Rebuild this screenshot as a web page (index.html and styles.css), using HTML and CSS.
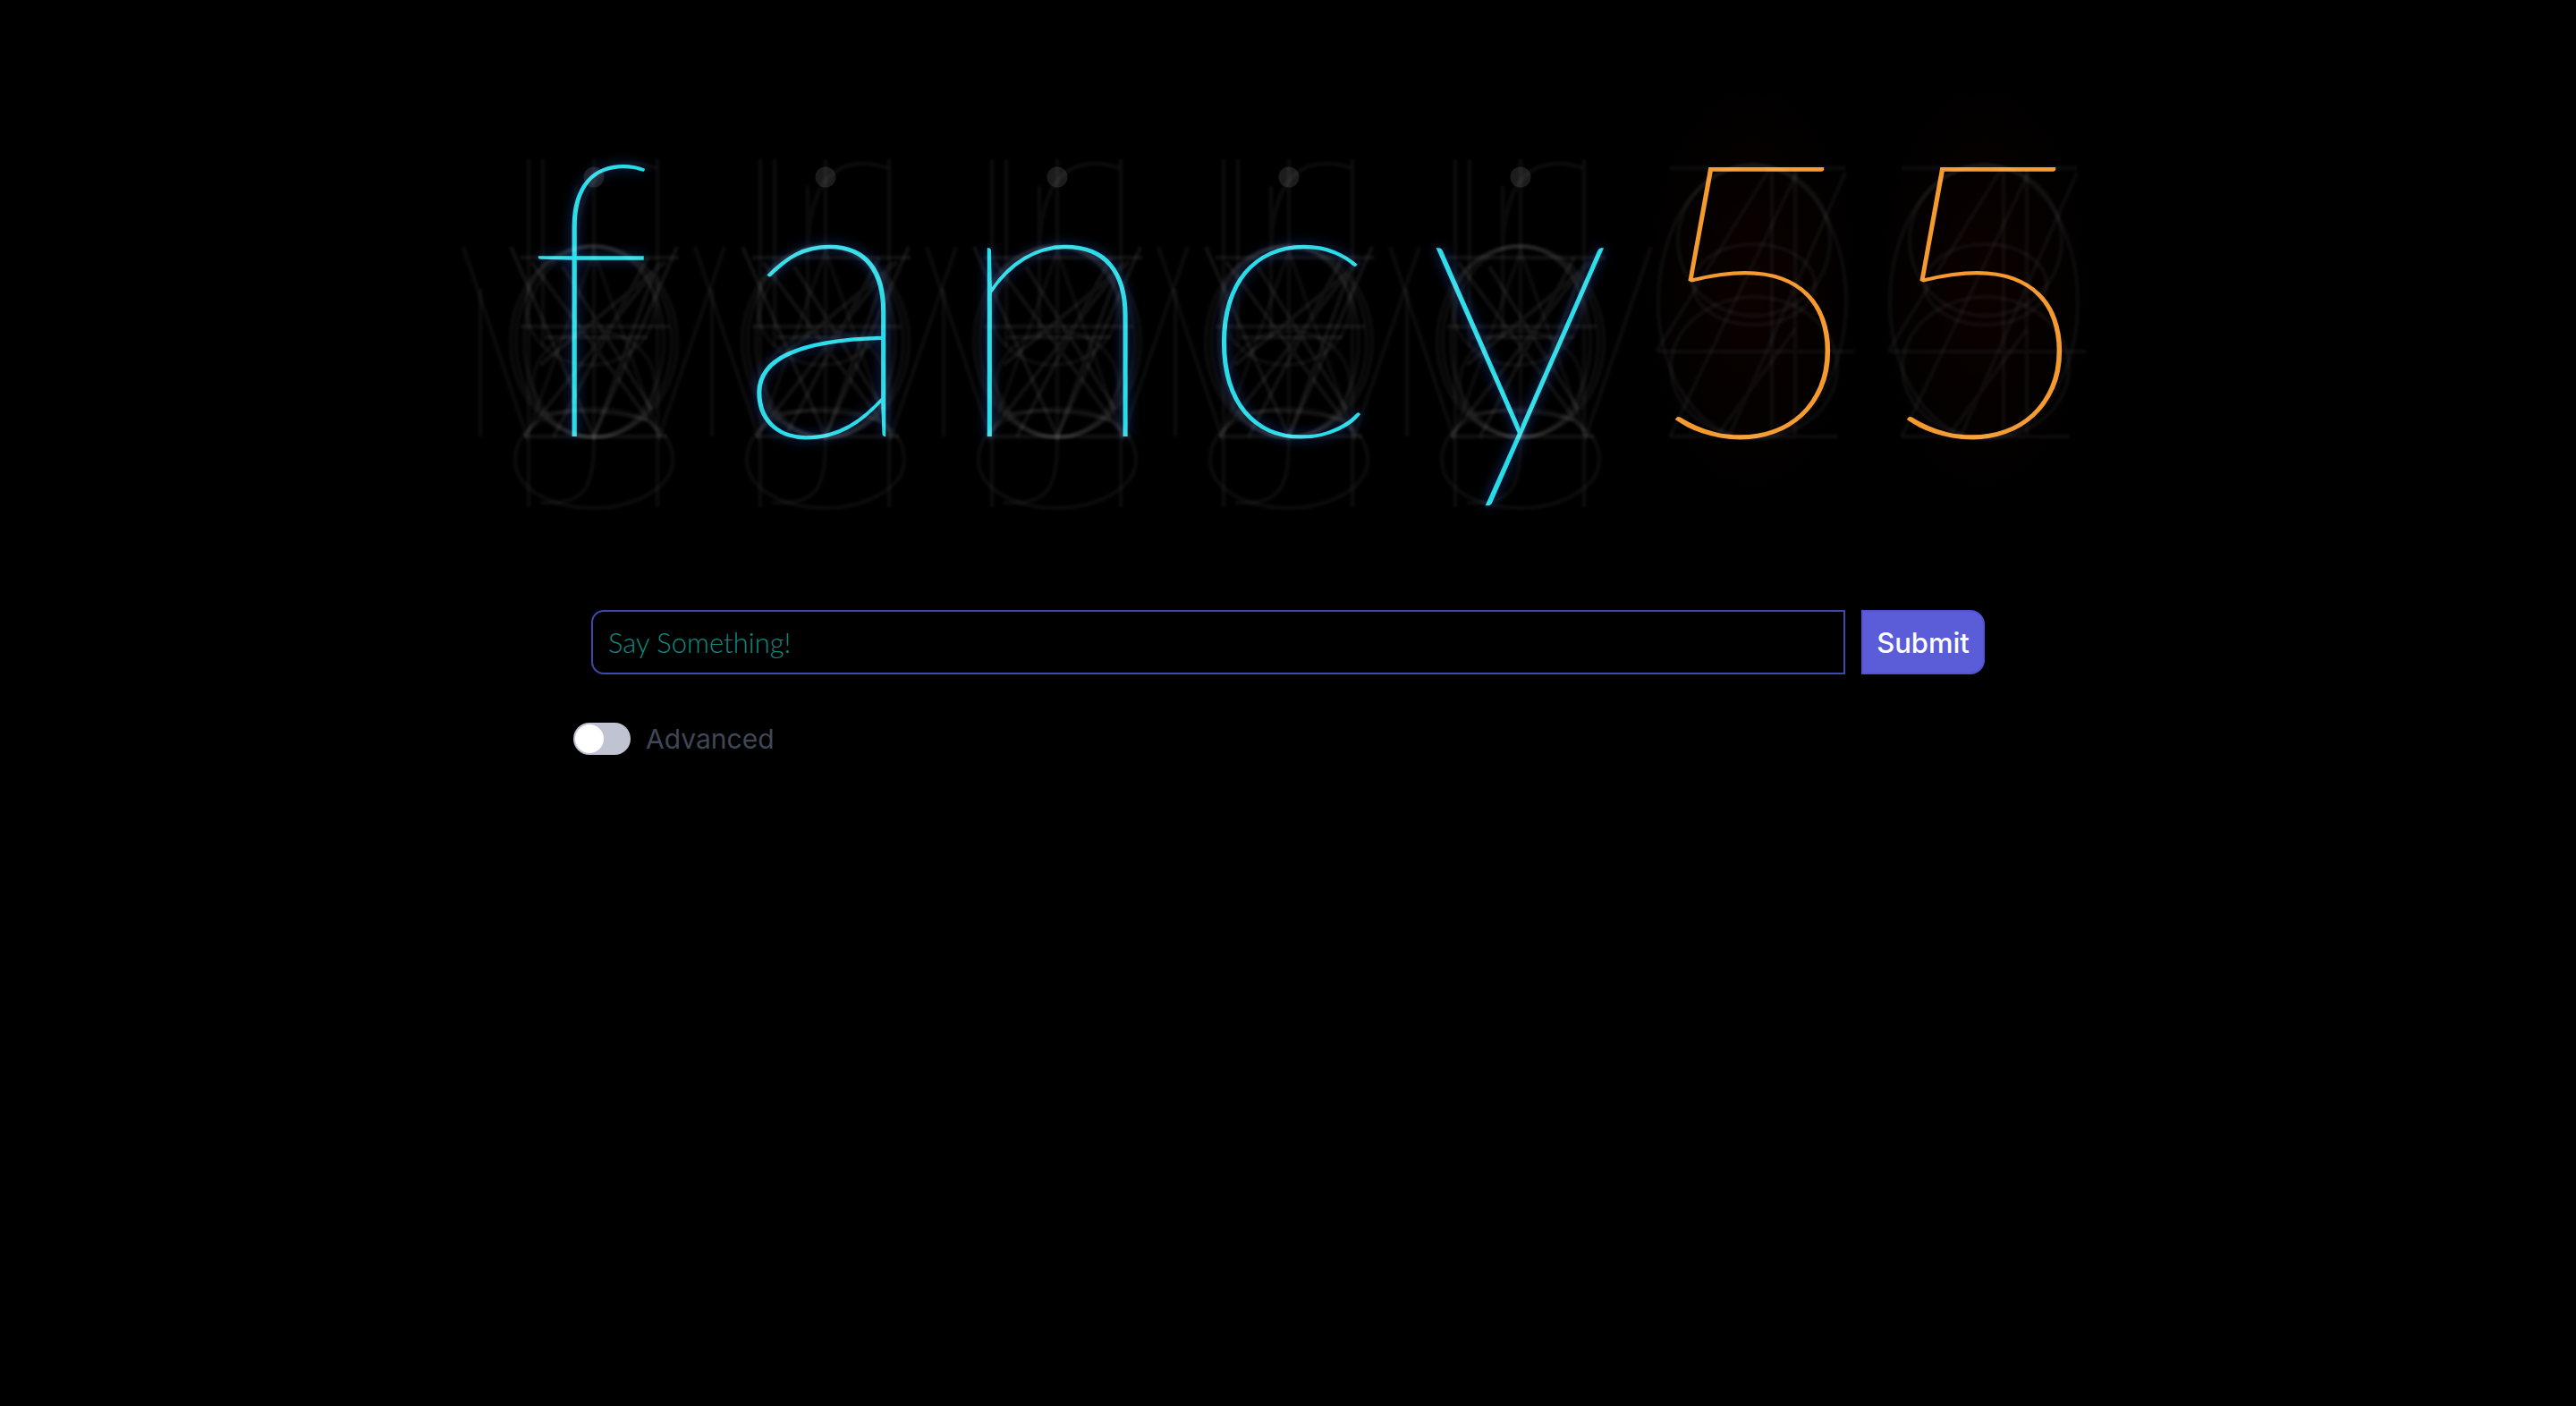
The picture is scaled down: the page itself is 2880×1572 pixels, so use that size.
FILE: index.html
```html
<!DOCTYPE html>
<html lang="en">
  <head>
    <meta charset="UTF-8" />
    <meta name="viewport" content="width=device-width, initial-scale=1.0" />
    <title>fancy55</title>
    <link rel="stylesheet" href="styles.css">
  </head>
  <body>
    <svg class="defs" aria-hidden="true">
      <symbol id="ghost-letter" viewBox="-160 -416 320 500" overflow="visible">
        <g class="faint">
          <path d="M-73 -310V79M71 -310V79M-57 -310V-100M-127 -165V0M0 -310V0" />
          <path d="M-20 -110V-280M-20 -190C-22 -270 0 -305 42 -305C54 -305 62 -303 70 -300" />
          <path d="M0 0C0 60 -10 76 -60 74" />
          <path d="M-88 26C-88 -50 88 -50 88 26C88 60 40 80 0 80C-45 80 -88 60 -88 26Z" />
          <path d="M-146 -212L-75 0L0 -207L73 0L146 -212" />
          <ellipse cx="-4" cy="-146" rx="72" ry="66" />
          <ellipse cx="0" cy="-59" rx="68" ry="59" />
          <ellipse cx="0" cy="-106" rx="93" ry="107" />
          <ellipse cx="0" cy="-106" rx="87" ry="107" />
          <ellipse cx="0" cy="-106" rx="78" ry="107" />
        </g>
        <g class="mid">
          <path d="M-93 -212L0 0L93 -212" />
          <path d="M-82 -200H95M-82 -123H85M-55 -111H60M-78 0H82M-55 -25C-20 -32 30 -28 60 -18" />
          <path d="M-45 0L60 -200M0 0L70 -190M-78 0L75 -195M-70 -195L75 0M-35 -190L65 -30M80 -195L-60 -80" />
        </g>
        <circle class="dot" cx="0" cy="-290" r="11.5" />
      </symbol>
      <symbol id="ghost-digit" viewBox="-160 -416 320 500" overflow="visible">
        <g class="faint">
          <path d="M-92 -300H104M-105 -95H114M-92 0H96M22 -300V0M48 -300V0" />
          <path d="M104 -295L-26 0M50 -295L-92 0M20 -300L-107 -95M48 -120L-40 0" />
          <ellipse cx="0" cy="-151" rx="105" ry="153" />
          <ellipse cx="2" cy="-219" rx="85" ry="84" />
          <ellipse cx="2" cy="-77" rx="93" ry="79" />
          <ellipse cx="2" cy="-170" rx="68" ry="45" />
        </g>
      </symbol>
    </svg>

    <header class="logo">
      <div class="cell"><span class="glyph glyph-f">f</span><svg class="ghost"><use href="#ghost-letter" /></svg></div>
      <div class="cell"><span class="glyph glyph-a">a</span><svg class="ghost"><use href="#ghost-letter" /></svg></div>
      <div class="cell"><span class="glyph">n</span><svg class="ghost"><use href="#ghost-letter" /></svg></div>
      <div class="cell"><span class="glyph">c</span><svg class="ghost"><use href="#ghost-letter" /></svg></div>
      <div class="cell"><span class="glyph">y</span><svg class="ghost"><use href="#ghost-letter" /></svg></div>
      <div class="cell digit"><span class="glyph">5</span><svg class="ghost"><use href="#ghost-digit" /></svg></div>
      <div class="cell digit"><span class="glyph">5</span><svg class="ghost"><use href="#ghost-digit" /></svg></div>
    </header>

    <form class="panel" action="#">
      <div class="say">
        <input class="say-input" type="text" placeholder="Say Something!" />
        <button class="say-submit" type="button">Submit</button>
      </div>
      <div class="advanced">
        <span class="toggle"><span class="knob"></span></span>
        <span class="advanced-label">Advanced</span>
      </div>
    </form>
  </body>
</html>
```

FILE: styles.css
```css
* {
  margin: 0px;
  padding: 0px;
  box-sizing: border-box;
}
body {
  min-height: 100vh;
  background-color: black;
  overflow: hidden;
}
.defs {
  position: absolute;
  width: 0;
  height: 0;
}
.logo {
  display: flex;
  justify-content: center;
  padding-top: 72px;
}
.cell {
  position: relative;
  width: 259px;
  height: 500px;
  text-align: center;
}
.digit {
  background: radial-gradient(closest-side, rgba(255, 30, 0, 0.045), rgba(255, 30, 0, 0));
}
.glyph {
  font-family: Lato, sans-serif;
  font-weight: 100;
  font-size: 430px;
  line-height: 500px;
  color: #26dce8;
  text-shadow: 0 0 14px rgba(50, 110, 255, 0.55);
}
.glyph-f {
  margin-right: 6px;
}
.glyph-a {
  margin-left: 8px;
}
.digit .glyph {
  margin-left: 6px;
  color: #f59a2e;
  text-shadow: none;
}
.ghost {
  position: absolute;
  left: -30px;
  top: 0;
  width: 320px;
  height: 500px;
  overflow: visible;
  pointer-events: none;
}
.faint,
.mid {
  fill: none;
  stroke: white;
  stroke-width: 5;
  filter: blur(0.8px);
}
.faint {
  stroke-opacity: 0.04;
}
.mid {
  stroke-opacity: 0.06;
}
.dot {
  fill: white;
  fill-opacity: 0.11;
}
.panel {
  width: 1598px;
  margin: 110px auto 0px;
}
.say {
  display: flex;
  gap: 18px;
  padding: 0px 20px;
}
.say-input {
  flex: 1;
  height: 72px;
  padding: 0px 17px;
  background-color: black;
  border: 2px solid #4048ad;
  border-radius: 14px 0px 0px 14px;
  font-family: Lato, sans-serif;
  font-weight: 300;
  font-size: 31px;
  color: #0d7d75;
}
.say-input::placeholder {
  color: #0f8a80;
  opacity: 1;
}
.say-input:focus {
  outline: 0;
}
.say-submit {
  width: 138px;
  height: 72px;
  background-color: #5a5cd8;
  border: 2px solid #5352d4;
  border-radius: 0px 16px 16px 0px;
  font-family: Inter, sans-serif;
  font-weight: 500;
  font-size: 31px;
  color: white;
}
.advanced {
  display: flex;
  align-items: center;
  gap: 17px;
  margin-top: 54px;
}
.toggle {
  display: flex;
  align-items: center;
  width: 64px;
  height: 36px;
  padding: 2px;
  background-color: #c0c4d2;
  border-radius: 18px;
}
.knob {
  width: 32px;
  height: 32px;
  background-color: white;
  border-radius: 50%;
}
.advanced-label {
  font-family: Inter, sans-serif;
  font-size: 30px;
  color: #3f4656;
}
```
